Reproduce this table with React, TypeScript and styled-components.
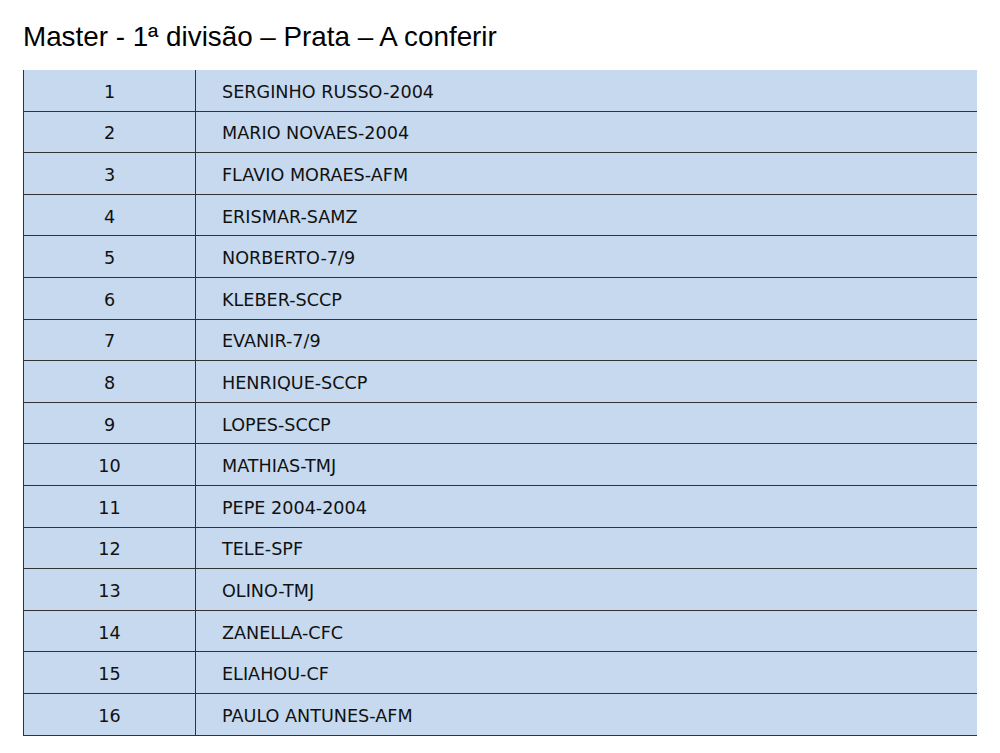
import styled, { createGlobalStyle } from 'styled-components';

const GlobalStyle = createGlobalStyle`
  body {
    margin: 0;
    background: #ffffff;
  }
`;

const Page = styled.div`
  padding: 22px 24px 0 23px;
`;

const Title = styled.h1`
  margin: 0 0 18px 0;
  font-family: 'Liberation Sans', Arial, sans-serif;
  font-weight: normal;
  font-size: 27.8px;
  line-height: 30px;
  color: #000000;
`;

const Table = styled.div`
  display: flex;
  flex-direction: column;
  width: 953px;
  border-left: 1.5px solid #333333;
  font-family: 'DejaVu Sans', Verdana, sans-serif;
  font-size: 17.6px;
  color: #111111;
`;

const Row = styled.div`
  display: grid;
  grid-template-columns: 172px 1fr;
  height: 41.6px;
  box-sizing: border-box;
  background: #c6d9ef;
  border-bottom: 1.5px solid #333333;
`;

const Cell = styled.div<{ $center?: boolean }>`
  display: flex;
  align-items: center;
  justify-content: ${(p) => (p.$center ? 'center' : 'flex-start')};
  padding-top: 3px;
  padding-left: ${(p) => (p.$center ? '0' : '26px')};
  border-right: ${(p) => (p.$center ? '1px solid #333333' : 'none')};
`;

const players = [
  'SERGINHO RUSSO-2004',
  'MARIO NOVAES-2004',
  'FLAVIO MORAES-AFM',
  'ERISMAR-SAMZ',
  'NORBERTO-7/9',
  'KLEBER-SCCP',
  'EVANIR-7/9',
  'HENRIQUE-SCCP',
  'LOPES-SCCP',
  'MATHIAS-TMJ',
  'PEPE 2004-2004',
  'TELE-SPF',
  'OLINO-TMJ',
  'ZANELLA-CFC',
  'ELIAHOU-CF',
  'PAULO ANTUNES-AFM',
];

function App(): JSX.Element {
  return (
    <>
      <GlobalStyle />
      <Page>
        <Title>Master - 1ª divisão – Prata – A conferir</Title>
        <Table>
          {players.map((name, index) => (
            <Row key={index}>
              <Cell $center>{index + 1}</Cell>
              <Cell>{name}</Cell>
            </Row>
          ))}
        </Table>
      </Page>
    </>
  );
}

export default App;
